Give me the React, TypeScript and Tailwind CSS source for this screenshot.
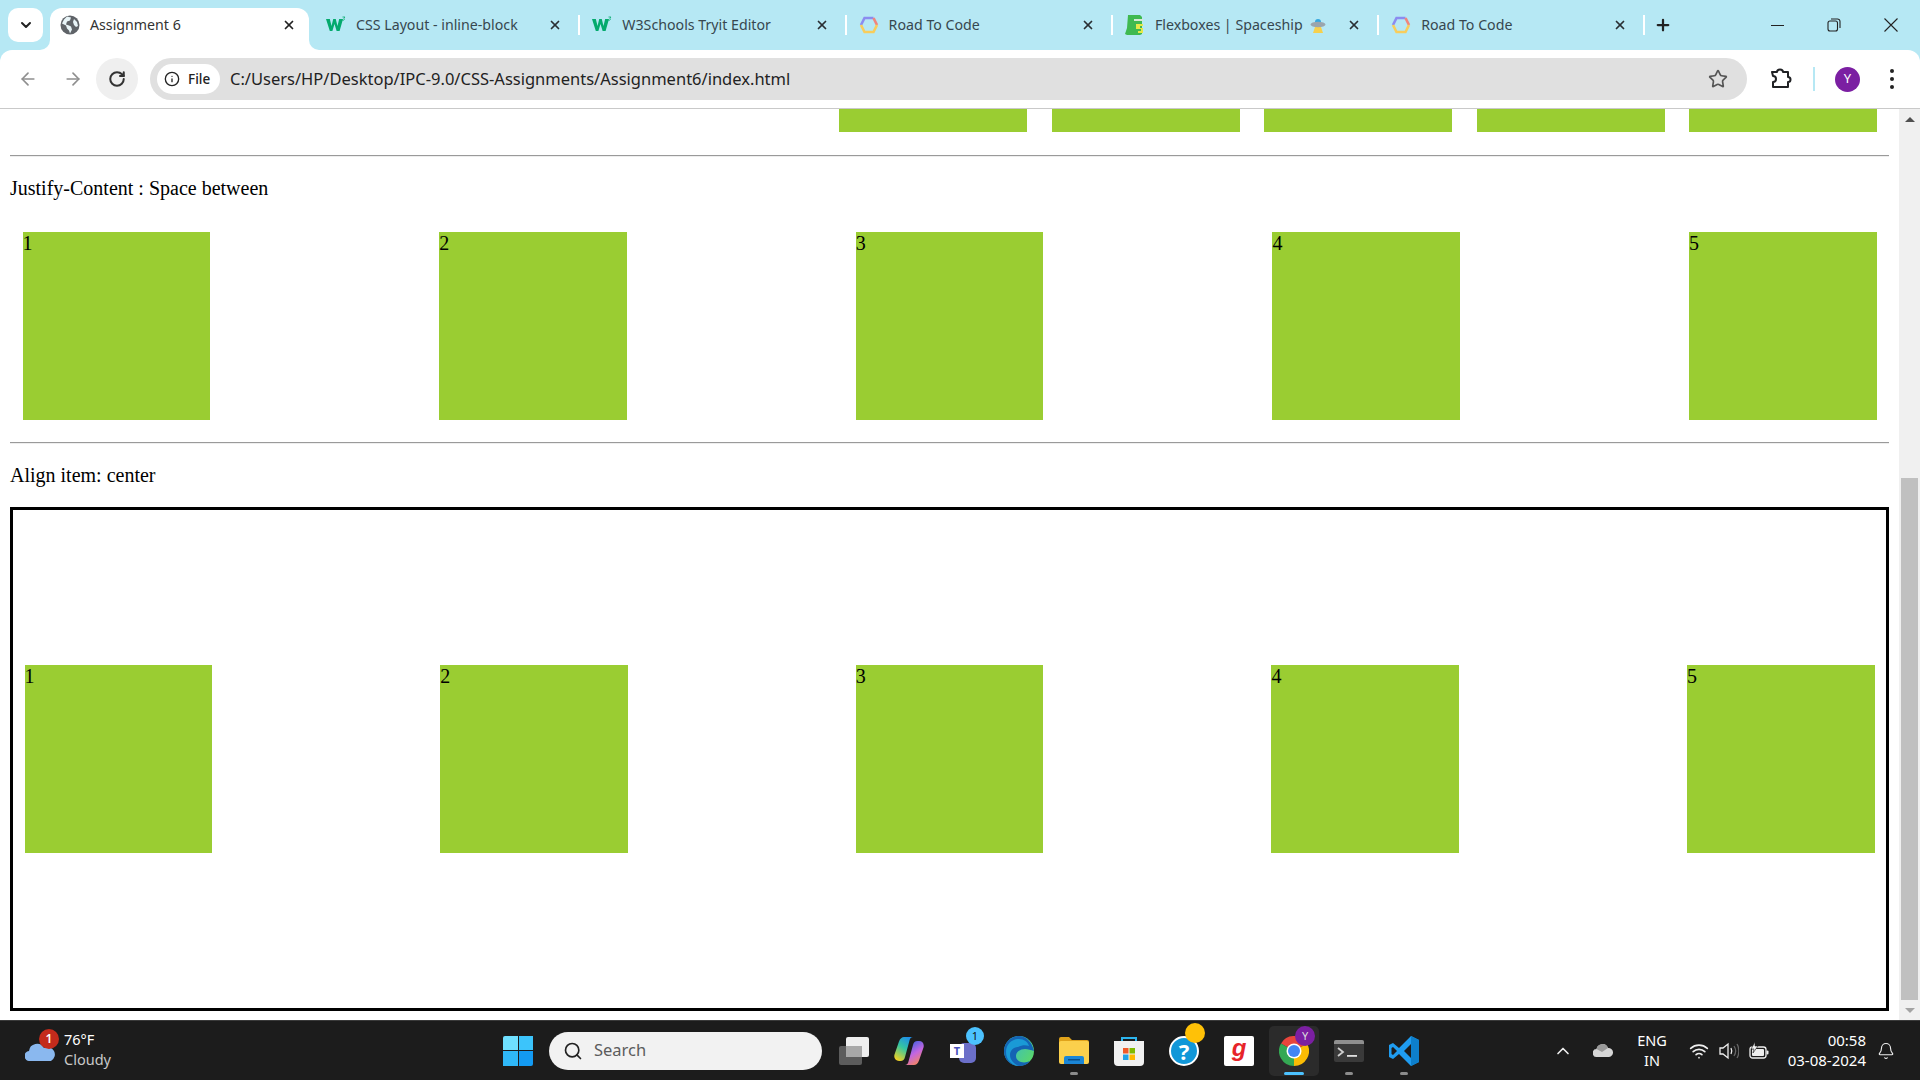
import type { ReactNode } from "react";
import { ArrowLeft, ArrowRight, Bell, ChevronDown, ChevronUp, Info, Plus, RotateCw, Search, Star, Wifi, X } from "lucide-react";

const uiFont = "font-['Noto_Sans','Open_Sans',sans-serif]";

function GlobeIcon() {
  return (
    <svg width="20" height="20" viewBox="0 0 20 20">
      <circle cx="10" cy="10" r="9.5" fill="#5f6368" />
      <path d="M7 1.5l4 1-1 3-3 1-1 3 3 1 2 1 1 3-2 4-1-3-2-2-1-3-4-2 2-4z" fill="#e8f4f7" />
      <path d="M14 4l3 3 1 4-2 1-2-2-1-3z" fill="#e8f4f7" />
    </svg>
  );
}

function W3Icon() {
  return (
    <svg width="20" height="20" viewBox="0 0 20 20">
      <path d="M0 4h4.500l2 7 2-7h3l2 7 2-7H20l-4 12h-3.500L10 9l-2.500 7H4.500z" fill="#04aa6d" transform="scale(.85 1)" />
      <path d="M16.500 2h2.500l-1.200 1.300c.9.3.9 2-.9 2l-.6-.2" fill="none" stroke="#04aa6d" strokeWidth="0.8" />
    </svg>
  );
}

function RoadIcon() {
  return (
    <svg width="20" height="20" viewBox="0 0 20 20" fill="none" strokeWidth="2.600">
      <path d="M2 10l3.500-7h9" stroke="#8b8cf0" />
      <path d="M14.500 3l3.500 7" stroke="#f0857d" />
      <path d="M18 10l-3.500 7h-9L2 10" stroke="#f8cd5c" />
    </svg>
  );
}

function DinoIcon() {
  return (
    <svg width="20" height="22" viewBox="0 0 20 22">
      <path d="M3 1h12l2 2v17l-2 1H2l-2-1 2-6z" fill="#3fb950" />
      <path d="M9 5h9v2H9z" fill="#d7e8d2" />
      <path d="M11 10h7v2h-3v2h3v5h-5v-2h3v-2h-5z" fill="#e6e84a" />
    </svg>
  );
}

function UfoIcon() {
  return (
    <svg width="16" height="16" viewBox="0 0 16 16" className="ml-[7px]">
      <path d="M5 10h6l2 6H3z" fill="#f6d04d" />
      <path d="M5 5a3 3 0 016 0z" fill="#35a8e0" />
      <ellipse cx="8" cy="7.500" rx="7.500" ry="2.800" fill="#9aa5ad" />
    </svg>
  );
}

function Tab({ icon, title, extra }: { icon: ReactNode; title: string; extra?: ReactNode }) {
  return (
    <div className="w-[266.300px] h-[34px] flex items-center pl-[14px] shrink-0">
      <span className="w-[20px] flex justify-center shrink-0">{icon}</span>
      <span className="ml-[10px] flex-1 flex items-center text-[14.200px] text-[#36474f] whitespace-nowrap">
        {title}
        {extra}
      </span>
      <X size={14} strokeWidth={3} className="text-[#2a2f33]" />
      <span className="ml-[16px] mr-[-2px] w-[2px] h-[20px] bg-white" />
    </div>
  );
}

function TabStrip() {
  return (
    <div className={`h-[50px] bg-[#b6e8f4] flex items-start pt-[8px] shrink-0 ${uiFont}`}>
      <div className="ml-[8px] w-[35px] h-[34px] bg-white rounded-[10px] flex items-center justify-center">
        <ChevronDown size={16} strokeWidth={3} className="text-[#222]" />
      </div>
      <div className="relative ml-[7px] w-[259px] h-[42px] bg-white rounded-t-[12px] pb-[8px] flex items-center pl-[10px] pr-[13px]">
        <span className="absolute left-[-10px] bottom-0 w-[10px] h-[10px] bg-white" />
        <span className="absolute left-[-10px] bottom-0 w-[10px] h-[10px] bg-[#b6e8f4] rounded-br-[10px]" />
        <span className="absolute right-[-10px] bottom-0 w-[10px] h-[10px] bg-white" />
        <span className="absolute right-[-10px] bottom-0 w-[10px] h-[10px] bg-[#b6e8f4] rounded-bl-[10px]" />
        <GlobeIcon />
        <span className="ml-[10px] flex-1 text-[14.200px] text-[#333]">Assignment 6</span>
        <X size={14} strokeWidth={3} className="text-[#222]" />
      </div>
      <div className="ml-[3px] flex">
        <Tab icon={<W3Icon />} title="CSS Layout - inline-block" />
        <Tab icon={<W3Icon />} title="W3Schools Tryit Editor" />
        <Tab icon={<RoadIcon />} title="Road To Code" />
        <Tab icon={<DinoIcon />} title="Flexboxes | Spaceship" extra={<UfoIcon />} />
        <Tab icon={<RoadIcon />} title="Road To Code" />
      </div>
      <Plus size={18} strokeWidth={3} className="ml-[11px] mt-[8px] text-[#222]" />
      <div className="ml-auto flex items-center h-[34px] pr-[22px]">
        <span className="w-[13px] h-[1px] bg-[#222]" />
        <svg width="14" height="14" viewBox="0 0 14 14" fill="none" stroke="#222" strokeWidth="1.100" className="ml-[43px]">
          <rect x="1" y="3" width="9.500" height="10" rx="2" />
          <path d="M4 1h6.500a2.500 2.500 0 012.500 2.500V10" />
        </svg>
        <svg width="14" height="14" viewBox="0 0 14 14" stroke="#222" strokeWidth="1.100" className="ml-[43px]">
          <path d="M.5.5l13 13M13.500.5l-13 13" />
        </svg>
      </div>
    </div>
  );
}

function ExtensionIcon() {
  return (
    <svg width="22" height="22" viewBox="0 0 22 22" fill="none" stroke="#202124" strokeWidth="2" strokeLinejoin="round">
      <path d="M2 5h5a3 2.500 0 016 0h5v5a2.500 2.500 0 010 5v5H3v-5a3 3 0 000-6z" transform="translate(0 -1)" />
    </svg>
  );
}

function Toolbar() {
  return (
    <div className={`h-[59px] bg-[#b6e8f4] shrink-0 ${uiFont}`}>
      <div className="h-full bg-white rounded-t-[12px] border-b border-[#c9c9c9] flex items-center">
        <ArrowLeft size={20} strokeWidth={2} className="ml-[18px] text-[#8f8f8f]" />
        <ArrowRight size={20} strokeWidth={2} className="ml-[25px] text-[#8f8f8f]" />
        <div className="ml-[13px] w-[42px] h-[42px] rounded-full bg-[#efefef] flex items-center justify-center">
          <RotateCw size={18} strokeWidth={2.700} className="text-[#333]" />
        </div>
        <div className="ml-[12px] w-[1597px] h-[42px] rounded-full bg-[#e0e0e0] flex items-center pl-[7px] pr-[19px]">
          <div className="w-[63px] h-[30px] rounded-full bg-white flex items-center pl-[7px] text-[#222]">
            <Info size={16} strokeWidth={2} />
            <span className="ml-[8px] text-[13.500px] font-medium">File</span>
          </div>
          <span className="ml-[10px] flex-1 text-[#222] text-[16.500px] whitespace-nowrap">C:/Users/HP/Desktop/IPC-9.0/CSS-Assignments/Assignment6/index.html</span>
          <Star size={20} strokeWidth={2} className="text-[#555]" />
        </div>
        <div className="ml-[23px]">
          <ExtensionIcon />
        </div>
        <span className="ml-[21px] w-[2px] h-[24px] bg-[#b6e8f4]" />
        <div className="ml-[20px] w-[25px] h-[25px] rounded-full bg-[#7b1fa2] flex items-center justify-center text-[13px] text-white">Y</div>
        <div className="ml-[30px] flex flex-col gap-[4px]">
          <span className="w-[4px] h-[4px] rounded-full bg-[#222]" />
          <span className="w-[4px] h-[4px] rounded-full bg-[#222]" />
          <span className="w-[4px] h-[4px] rounded-full bg-[#222]" />
        </div>
      </div>
    </div>
  );
}

function GreenBox({ label }: { label: string }) {
  return <div className="w-[187.500px] h-[188px] bg-[#9acd32] text-black shrink-0">{label}</div>;
}

function Rule() {
  return <div className="h-[2px] border-t border-[#9a9a9a] bg-[#eeeeee] shrink-0" />;
}

const labels = ["1", "2", "3", "4", "5"];

function Page() {
  return (
    <div className="flex-1 min-w-0 overflow-hidden px-[10px] bg-white font-['Liberation_Serif',serif] text-[20px] leading-[23px] text-black">
      <div className="flex justify-end gap-[24.500px] pr-[12px]">
        {labels.map((l) => (
          <div key={l} className="w-[188px] h-[23px] bg-[#9acd32]" />
        ))}
      </div>
      <div className="mt-[23px]">
        <Rule />
      </div>
      <p className="mt-[20px]">Justify-Content : Space between</p>
      <div className="mt-[32px] flex justify-between px-[12.500px]">
        {labels.map((l) => (
          <GreenBox key={l} label={l} />
        ))}
      </div>
      <div className="mt-[22px]">
        <Rule />
      </div>
      <p className="mt-[20px]">Align item: center</p>
      <div className="mt-[20px] h-[504px] border-[3px] border-black flex items-center justify-between px-[11.500px]">
        {labels.map((l) => (
          <GreenBox key={l} label={l} />
        ))}
      </div>
    </div>
  );
}

function Scrollbar() {
  return (
    <div className="w-[21px] bg-[#f0f0f0] flex flex-col items-center shrink-0">
      <div className="h-[21px] flex items-center justify-center">
        <span className="w-0 h-0 border-x-[5px] border-x-transparent border-b-[5px] border-b-[#505050]" />
      </div>
      <div className="flex-1 w-full pl-[2px] pr-[2px] pt-[348px]">
        <div className="h-full bg-[#c0c0c0]" />
      </div>
      <div className="h-[20px] flex items-center justify-center">
        <span className="w-0 h-0 border-x-[5px] border-x-transparent border-t-[5px] border-t-[#a3a3a3]" />
      </div>
    </div>
  );
}

function WinLogo() {
  return (
    <div className="w-[30px] h-[30px] grid grid-cols-2 gap-[1px] shrink-0">
      <span className="bg-[#6fe0ff] rounded-tl-[2px]" />
      <span className="bg-[#3cc4fb]" />
      <span className="bg-[#2fb8f8]" />
      <span className="bg-[#139af2] rounded-br-[2px]" />
    </div>
  );
}

function TaskIcon({ children, dot, active }: { children: ReactNode; dot?: boolean; active?: boolean }) {
  return (
    <div className={`relative w-[50px] h-[50px] flex items-center justify-center shrink-0 rounded-[5px] ${active ? "bg-[#2b2b2b]" : ""}`}>
      {children}
      {dot && <span className="absolute bottom-[1px] left-[21px] w-[8px] h-[3px] rounded-full bg-[#8c8c8c]" />}
      {active && <span className="absolute bottom-[1px] left-[15px] w-[20px] h-[3px] rounded-full bg-[#4cc2ff]" />}
    </div>
  );
}

function TaskView() {
  return (
    <svg width="30" height="28" viewBox="0 0 30 28">
      <rect x="0" y="9" width="23" height="19" rx="2" fill="#5c5c5c" />
      <rect x="7" y="0" width="23" height="20" rx="2" fill="#eeeeee" />
      <rect x="7" y="9" width="16" height="11" fill="#a8a8a8" />
    </svg>
  );
}

function Copilot() {
  return (
    <svg width="30" height="28" viewBox="0 0 30 28">
      <defs>
        <linearGradient id="cpA" x1="0.700" y1="0" x2="0.200" y2="1">
          <stop offset="0" stopColor="#1f8fe8" />
          <stop offset="0.450" stopColor="#35c6a0" />
          <stop offset="1" stopColor="#f5d020" />
        </linearGradient>
        <linearGradient id="cpB" x1="0.300" y1="0" x2="0.800" y2="1">
          <stop offset="0" stopColor="#3a60e0" />
          <stop offset="0.500" stopColor="#c466e0" />
          <stop offset="1" stopColor="#fb8a4a" />
        </linearGradient>
      </defs>
      <path d="M10 0h9c-2 0-3 1.500-3.500 3.500L11 20c-.6 2.500-2 4-4.500 4H5c-3.500 0-5.500-3-4.500-6.500L5 4.500C6 1.500 8 0 10 0z" fill="url(#cpA)" />
      <path d="M20 28h-9c2 0 3-1.500 3.500-3.500L19 8c.6-2.500 2-4 4.500-4H25c3.500 0 5.500 3 4.500 6.500L25 23.500C24 26.500 22 28 20 28z" fill="url(#cpB)" />
    </svg>
  );
}

function Teams() {
  return (
    <div className="relative w-[28px] h-[24px]">
      <span className="absolute left-[9px] top-[4px] w-[17px] h-[20px] rounded-[5px] bg-[#6b6fc9]" />
      <span className="absolute left-0 top-[5px] w-[14px] h-[14px] bg-white text-[#4b53bc] text-[11px] font-bold leading-[14px] text-center">T</span>
      <span className="absolute left-[16px] top-[-12px] w-[18px] h-[18px] rounded-full bg-[#4cc2ff] text-[#111] text-[11px] leading-[18px] text-center">1</span>
    </div>
  );
}

function Edge() {
  return (
    <svg width="30" height="30" viewBox="0 0 30 30">
      <defs>
        <linearGradient id="edgeA" x1="0" y1="0" x2="1" y2="0.700">
          <stop offset="0" stopColor="#2fb3e6" />
          <stop offset="1" stopColor="#5ad76b" />
        </linearGradient>
      </defs>
      <circle cx="15" cy="15" r="15" fill="url(#edgeA)" />
      <path d="M0 15c0 9 7 15 15 15 5 0 9-2 11-5-6 3-14 1-14-5 0-4 4-7 9-7 3 0 6 1 9 2C28 6 22 0 15 0 7 0 0 7 0 15z" fill="#1464b4" />
      <path d="M14 11c-5 0-8 4-8 8 0 5 4 9 9 11-7-.5-13-6-13-14C2 8 8 3 15 3c5 0 9 3 10 7-3-1-7-1-11 1z" fill="#1a9ad6" />
    </svg>
  );
}

function Folder() {
  return (
    <svg width="30" height="27" viewBox="0 0 30 27">
      <path d="M0 2a2 2 0 012-2h8l3 3h15a2 2 0 012 2v3H0z" fill="#e0a31b" />
      <rect x="0" y="4" width="30" height="23" rx="2" fill="#fbd04c" />
      <path d="M5 27v-6a2 2 0 012-2h16a2 2 0 012 2v6z" fill="#1b86d6" />
      <rect x="9" y="22" width="12" height="1.500" fill="#0a4f8a" />
    </svg>
  );
}

function Store() {
  return (
    <svg width="30" height="30" viewBox="0 0 30 30">
      <path d="M8 6V2h14v4" fill="none" stroke="#2cb5ef" strokeWidth="2" />
      <path d="M0 5h30v21a4 4 0 01-4 4H4a4 4 0 01-4-4z" fill="#f1f1f1" />
      <rect x="9" y="12" width="5.500" height="5.500" fill="#ef5a29" />
      <rect x="15.500" y="12" width="5.500" height="5.500" fill="#7fba00" />
      <rect x="9" y="18.500" width="5.500" height="5.500" fill="#1fa2e8" />
      <rect x="15.500" y="18.500" width="5.500" height="5.500" fill="#fdb900" />
    </svg>
  );
}

function HelpIcon() {
  return (
    <div className="relative w-[30px] h-[30px] rounded-full bg-[#1197d8] border-[2px] border-white flex items-center justify-center text-white text-[22px] font-bold leading-none">
      ?
      <span className="absolute left-[14px] top-[-15px] w-[20px] h-[20px] rounded-full bg-[#ffc107]" />
    </div>
  );
}

function Gaana() {
  return (
    <div className="w-[30px] h-[30px] rounded-[2px] bg-white flex items-center justify-center text-[#e72429] text-[24px] font-bold italic leading-none font-['Liberation_Sans',sans-serif] pb-[5px]">
      g
    </div>
  );
}

function ChromeIcon() {
  return (
    <div className="relative w-[30px] h-[30px]">
      <svg width="30" height="30" viewBox="0 0 30 30">
        <path d="M15 15L2 7.500A15 15 0 0128 7.500z" fill="#e8453c" />
        <path d="M15 15L28 7.500A15 15 0 0115 30z" fill="#fbbc04" />
        <path d="M15 15L15 30A15 15 0 012 7.500z" fill="#34a853" />
        <circle cx="15" cy="15" r="7.500" fill="#fff" />
        <circle cx="15" cy="15" r="6" fill="#4285f4" />
      </svg>
      <span className="absolute left-[16px] top-[-10px] w-[20px] h-[20px] rounded-full bg-[#7b1fa2] text-[#ddd] text-[11px] leading-[20px] text-center">Y</span>
    </div>
  );
}

function Terminal() {
  return (
    <svg width="30" height="22" viewBox="0 0 30 22">
      <rect width="30" height="22" rx="2" fill="#3a3a3a" />
      <path d="M0 2a2 2 0 012-2h26a2 2 0 012 2v2H0z" fill="#8f8f8f" />
      <path d="M4 8l5 4-5 4" fill="none" stroke="#cfcfcf" strokeWidth="1.800" />
      <rect x="13" y="15" width="10" height="1.800" fill="#e0e0e0" />
    </svg>
  );
}

function VsCode() {
  return (
    <svg width="30" height="30" viewBox="0 0 30 30">
      <path d="M22 0l8 4v22l-8 4-12-12-6 5-4-2v-12l4-2 6 5z" fill="#1f9cf0" />
      <path d="M22 8l-7 7 7 7z" fill="#1c1c1c" />
      <path d="M4 11l-1.500 1v6L4 19l4-4z" fill="#1c1c1c" />
      <path d="M22 0l8 4v22l-8 4z" fill="#0d7fcc" />
    </svg>
  );
}

function OneDrive() {
  return (
    <svg width="20" height="13" viewBox="0 0 20 13">
      <path d="M4 13a4 4 0 01-.5-8A6 6 0 0115 4a4.500 4.500 0 011 9z" fill="#d6d6d6" />
      <path d="M3.500 5A6 6 0 0115 4l-6 4z" fill="#9a9a9a" />
    </svg>
  );
}

function Speaker() {
  return (
    <svg width="20" height="18" viewBox="0 0 20 18" fill="none" strokeWidth="1.300">
      <path d="M1 6h3l5-4v14l-5-4H1z" stroke="#eee" />
      <path d="M12 6c1 2 1 4 0 6" stroke="#eee" />
      <path d="M15 4c2 3 2 7 0 10M18 2c2.500 4 2.500 10 0 14" stroke="#666" />
    </svg>
  );
}

function BatteryIcon() {
  return (
    <svg width="20" height="18" viewBox="0 0 20 18" fill="none">
      <rect x="1" y="5" width="16" height="11" rx="2.500" stroke="#eee" strokeWidth="1.300" />
      <rect x="3" y="7" width="12" height="7" rx="1" fill="#eee" />
      <rect x="17.500" y="8.500" width="2" height="4" rx="1" fill="#eee" />
      <path d="M6 0L2 7h3l-1 4 5-7H6z" fill="#eee" stroke="#1c1c1c" strokeWidth="0.600" />
    </svg>
  );
}

function Taskbar() {
  return (
    <div className={`h-[60px] bg-[#1c1c1c] border-t border-[#3a3a3a] shrink-0 flex items-center ${uiFont}`}>
      <div className="relative ml-[25px] w-[30px] h-[20px] mt-[1px] shrink-0">
        <svg width="30" height="20" viewBox="0 0 30 20" className="absolute top-0 left-0">
          <path d="M5 20a5 5 0 01-1-10 8 8 0 0115-3 6.500 6.500 0 017 13z" fill="#8ab8ef" />
        </svg>
        <span className="absolute left-[14px] top-[-12px] w-[20px] h-[20px] rounded-full bg-[#c42b1c] text-white text-[12px] font-semibold leading-[20px] text-center">1</span>
      </div>
      <div className="ml-[9px] mb-[3px] w-[100px] shrink-0 flex flex-col text-[14.500px] leading-[20px]">
        <span className="text-white">76°F</span>
        <span className="text-[#c8c8c8]">Cloudy</span>
      </div>
      <div className="ml-[339px] shrink-0">
        <WinLogo />
      </div>
      <div className="ml-[16px] w-[273px] h-[38px] rounded-full bg-[#f2f2f2] flex items-center pl-[14px] shrink-0">
        <Search size={20} strokeWidth={2} className="text-[#222]" />
        <span className="ml-[11px] text-[16.500px] text-[#5c5c5c]">Search</span>
      </div>
      <div className="ml-[7px] flex items-center gap-[5px] shrink-0">
        <TaskIcon><TaskView /></TaskIcon>
        <TaskIcon><Copilot /></TaskIcon>
        <TaskIcon><Teams /></TaskIcon>
        <TaskIcon><Edge /></TaskIcon>
        <TaskIcon dot><Folder /></TaskIcon>
        <TaskIcon><Store /></TaskIcon>
        <TaskIcon><HelpIcon /></TaskIcon>
        <TaskIcon><Gaana /></TaskIcon>
        <TaskIcon active><ChromeIcon /></TaskIcon>
        <TaskIcon dot><Terminal /></TaskIcon>
        <TaskIcon dot><VsCode /></TaskIcon>
      </div>
      <div className="ml-auto flex items-center text-white pr-[25px]">
        <ChevronUp size={20} strokeWidth={2} className="text-[#eee]" />
        <div className="ml-[20px]">
          <OneDrive />
        </div>
        <div className="ml-[23px] mb-[2px] w-[32px] text-center text-[14.500px] leading-[20px]">
          ENG
          <br />
          IN
        </div>
        <Wifi size={20} strokeWidth={2} className="ml-[21px] text-[#eee]" />
        <div className="ml-[10px]">
          <Speaker />
        </div>
        <div className="ml-[10px]">
          <BatteryIcon />
        </div>
        <div className="ml-[15px] mb-[2px] w-[82px] text-right text-[15px] leading-[20px] whitespace-nowrap">
          00:58
          <br />
          03-08-2024
        </div>
        <Bell size={18} strokeWidth={1.500} className="ml-[11px] text-[#eee]" />
      </div>
    </div>
  );
}

export default function App() {
  return (
    <div className="w-screen h-screen overflow-hidden flex flex-col">
      <TabStrip />
      <Toolbar />
      <div className="flex-1 min-h-0 flex">
        <Page />
        <Scrollbar />
      </div>
      <Taskbar />
    </div>
  );
}
